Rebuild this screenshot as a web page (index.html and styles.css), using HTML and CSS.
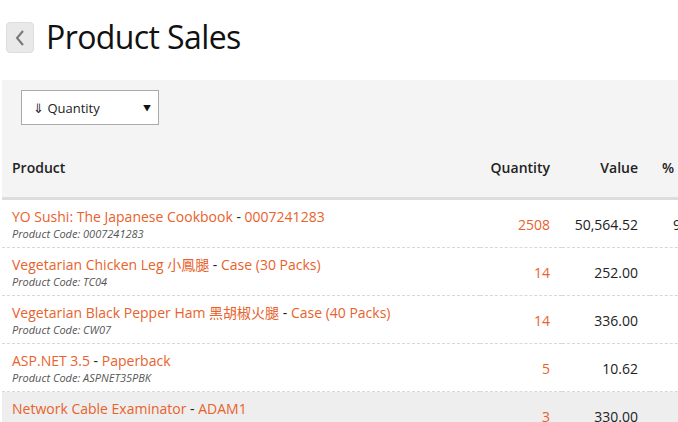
FILE: index.html
```html
<!DOCTYPE html>
<html>
<head>
<meta charset="utf-8">
<link rel="stylesheet" href="styles.css">
</head>
<body>
<div class="page">
  <div class="header">
    <a class="back" href="#"><svg width="12" height="18" viewBox="0 0 12 18"><path d="M9 2 L3 9 L9 16" fill="none" stroke="#777" stroke-width="2"/></svg></a>
    <h1 class="title">Product Sales</h1>
  </div>
  <div class="panel">
    <div class="toolbar">
      <div class="select"><span>&#8659; Quantity</span><span class="caret">&#9660;</span></div>
    </div>
    <table class="grid">
      <thead>
        <tr>
          <th class="c-prod">Product</th>
          <th class="c-num c-qty">Quantity</th>
          <th class="c-num c-val">Value</th>
          <th class="c-pct">%</th>
        </tr>
      </thead>
      <tbody>
        <tr>
          <td class="c-prod"><div class="name"><a href="#">YO Sushi: The Japanese Cookbook</a> - <a href="#">0007241283</a></div><div class="code">Product Code: 0007241283</div></td>
          <td class="c-num qty">2508</td>
          <td class="c-num">50,564.52</td>
          <td class="c-pct"><span class="pct">9</span></td>
        </tr>
        <tr>
          <td class="c-prod"><div class="name"><a href="#">Vegetarian Chicken Leg 小鳳腿</a> - <a href="#">Case (30 Packs)</a></div><div class="code">Product Code: TC04</div></td>
          <td class="c-num qty">14</td>
          <td class="c-num">252.00</td>
          <td class="c-pct"></td>
        </tr>
        <tr>
          <td class="c-prod"><div class="name"><a href="#">Vegetarian Black Pepper Ham 黑胡椒火腿</a> - <a href="#">Case (40 Packs)</a></div><div class="code">Product Code: CW07</div></td>
          <td class="c-num qty">14</td>
          <td class="c-num">336.00</td>
          <td class="c-pct"></td>
        </tr>
        <tr>
          <td class="c-prod"><div class="name"><a href="#">ASP.NET 3.5</a> - <a href="#">Paperback</a></div><div class="code">Product Code: ASPNET35PBK</div></td>
          <td class="c-num qty">5</td>
          <td class="c-num">10.62</td>
          <td class="c-pct"></td>
        </tr>
        <tr class="hover">
          <td class="c-prod"><div class="name"><a href="#">Network Cable Examinator</a> - <a href="#">ADAM1</a></div><div class="code">Product Code: ADAM1</div></td>
          <td class="c-num qty">3</td>
          <td class="c-num">330.00</td>
          <td class="c-pct"></td>
        </tr>
      </tbody>
    </table>
  </div>
</div>
</body>
</html>
```
FILE: styles.css
```css
html, body {
  margin: 0;
  padding: 0;
  background: #fff;
  overflow: hidden;
}
body {
  font-family: "Open Sans", "Noto Sans CJK TC", sans-serif;
  color: #222;
  width: 678px;
  height: 422px;
}
.page {
  padding: 0 0 0 2px;
}
.header {
  display: flex;
  align-items: flex-start;
  gap: 12px;
  height: 80px;
  padding: 22px 0 0 4px;
  box-sizing: border-box;
}
.back {
  display: flex;
  align-items: center;
  justify-content: center;
  width: 28px;
  height: 31px;
  background: #e9e9e9;
  border: 1px solid #dedede;
  border-radius: 4px;
  box-sizing: border-box;
}
.title {
  margin: -1px 0 0;
  font-size: 32px;
  letter-spacing: -0.6px;
  font-weight: 400;
  color: #111;
  line-height: 32px;
}
.panel {
  background: #f4f4f4;
  width: 740px;
}
.toolbar {
  padding: 10px 19px 0;
  height: 45px;
  box-sizing: border-box;
}
.select {
  width: 138px;
  height: 35px;
  box-sizing: border-box;
  border: 1px solid #aaa;
  background: #fff;
  display: flex;
  align-items: center;
  justify-content: space-between;
  padding: 0 7px 0 11px;
  font-size: 13px;
  color: #222;
}
.caret {
  font-size: 8px;
  color: #111;
}
.grid {
  border-collapse: collapse;
  width: 740px;
  table-layout: fixed;
}
.grid th {
  font-size: 14px;
  font-weight: 600;
  color: #222;
  line-height: 19px;
  padding: 33px 12px 20px 10px;
  border-bottom: 3px solid #dddddd;
  text-align: left;
}
.c-prod { width: 456px; }
.c-qty { width: 60px; }
.c-val { width: 66px; }
.grid th.c-num, .grid td.c-num { text-align: right; padding-right: 12px; }
.grid th.c-pct, .grid td.c-pct { padding-left: 12px; }
.grid td {
  background: #fff;
  font-size: 14px;
  line-height: 19px;
  padding: 7px 12px 5px 10px;
  border-bottom: 1px dashed #d8d8d8;
  vertical-align: top;
}
.grid td.c-num { vertical-align: middle; }
.grid td.c-pct { vertical-align: middle; }
.pct { padding-left: 11px; }
.grid tr.hover td { background: #eeeeee; }
.name { color: #222; white-space: nowrap; }
.name a { color: #e8622c; text-decoration: none; }
.code {
  font-size: 11px;
  font-style: italic;
  color: #555;
  line-height: 16px;
}
.qty { color: #e8622c; }
```
